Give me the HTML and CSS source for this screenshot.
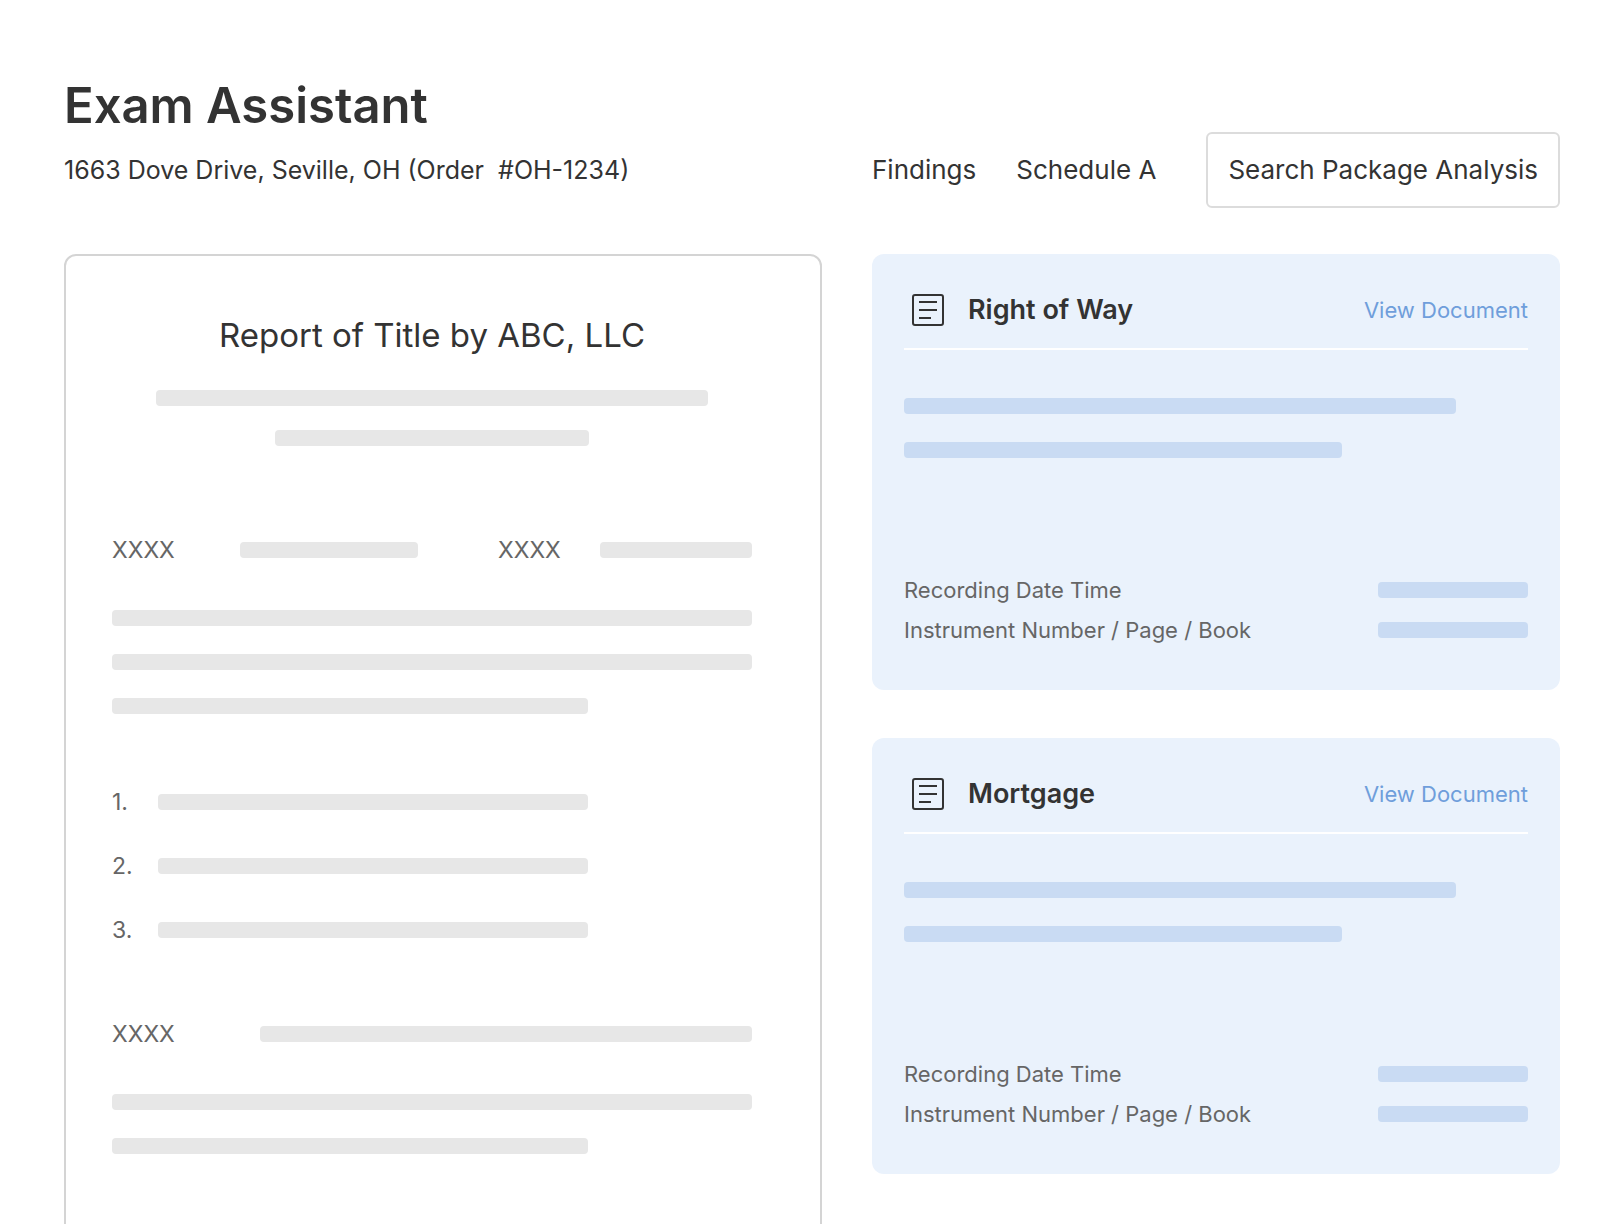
FILE: index.html
```html
<!DOCTYPE html>
<html lang="en">
<head>
    <meta charset="UTF-8">
    <meta name="viewport" content="width=device-width, initial-scale=1.0">
    <title>Exam Assistant</title>
    <link rel="stylesheet" href="styles.css">
</head>
<body>

<div class="page">
    <header class="header">
        <div class="heading">
            <h1>Exam Assistant</h1>
            <p>1663 Dove Drive, Seville, OH (Order &nbsp;#OH-1234)</p>
        </div>
        <nav class="nav">
            <a href="#findings">Findings</a>
            <a href="#schedule-a">Schedule A</a>
            <button type="button">Search Package Analysis</button>
        </nav>
    </header>

    <main class="content">
        <section class="report">
            <h2>Report of Title by ABC, LLC</h2>
            <div class="lines lines-center">
                <span class="bar bar-long"></span>
                <span class="bar bar-short"></span>
            </div>

            <div class="fields fields-double">
                <div class="field">
                    <span class="label">XXXX</span>
                    <span class="bar"></span>
                </div>
                <div class="field">
                    <span class="label">XXXX</span>
                    <span class="bar"></span>
                </div>
            </div>
            <div class="lines">
                <span class="bar"></span>
                <span class="bar"></span>
                <span class="bar bar-part"></span>
            </div>

            <ol class="items">
                <li><span class="bar"></span></li>
                <li><span class="bar"></span></li>
                <li><span class="bar"></span></li>
            </ol>

            <div class="fields fields-single">
                <div class="field">
                    <span class="label">XXXX</span>
                    <span class="bar"></span>
                </div>
            </div>
            <div class="lines">
                <span class="bar"></span>
                <span class="bar bar-part"></span>
            </div>
        </section>

        <div class="cards" id="findings">
            <article class="card">
                <div class="card-head">
                    <svg class="icon" viewBox="0 0 32 32" aria-hidden="true">
                        <rect x="1" y="1" width="30" height="30" rx="2"/>
                        <path d="M7 8h18M7 16h18M7 24h12"/>
                    </svg>
                    <h3>Right of Way</h3>
                    <a href="#right-of-way">View Document</a>
                </div>
                <div class="lines">
                    <span class="bar bar-long"></span>
                    <span class="bar bar-medium"></span>
                </div>
                <dl class="details">
                    <div>
                        <dt>Recording Date Time</dt>
                        <dd class="bar"></dd>
                    </div>
                    <div>
                        <dt>Instrument Number / Page / Book</dt>
                        <dd class="bar"></dd>
                    </div>
                </dl>
            </article>

            <article class="card">
                <div class="card-head">
                    <svg class="icon" viewBox="0 0 32 32" aria-hidden="true">
                        <rect x="1" y="1" width="30" height="30" rx="2"/>
                        <path d="M7 8h18M7 16h18M7 24h12"/>
                    </svg>
                    <h3>Mortgage</h3>
                    <a href="#mortgage">View Document</a>
                </div>
                <div class="lines">
                    <span class="bar bar-long"></span>
                    <span class="bar bar-medium"></span>
                </div>
                <dl class="details">
                    <div>
                        <dt>Recording Date Time</dt>
                        <dd class="bar"></dd>
                    </div>
                    <div>
                        <dt>Instrument Number / Page / Book</dt>
                        <dd class="bar"></dd>
                    </div>
                </dl>
            </article>
        </div>
    </main>
</div>

</body>
</html>
```
FILE: styles.css
```css
* {
    box-sizing: border-box;
}

body {
    margin: 0;
    background-color: #fff;
    color: #333;
    font-family: Inter, "Liberation Sans", sans-serif;
    font-size: 26px;
    line-height: 32px;
}

h1, h2, h3, p, ol, dl, dd {
    margin: 0;
    padding: 0;
}

a {
    color: inherit;
    text-decoration: none;
}

.page {
    height: 100vh;
    padding: 76px 64px 0;
    overflow: hidden;
}

/* header and content share the same two columns */
.header, .content {
    display: grid;
    grid-template-columns: 758fr 688fr;
    column-gap: 50px;
}

.header {
    align-items: end;
    margin-bottom: 46px;
}

.heading {
    padding-bottom: 22px;
}

.heading h1 {
    margin-bottom: 18px;
    font-size: 49px;
    font-weight: 600;
    line-height: 60px;
}

.heading p {
    font-size: 25px;
}

.nav {
    display: flex;
    align-items: center;
    gap: 40px;
    white-space: nowrap;
}

.nav button {
    height: 76px;
    margin-left: auto;
    padding: 0 20px;
    background-color: #fff;
    color: inherit;
    border: 2px solid #dcdcdc;
    border-radius: 6px;
    font: inherit;
    cursor: pointer;
}

.content {
    align-items: start;
}

/* placeholder text */
.bar {
    display: block;
    height: 16px;
    max-width: 100%;
    background-color: #e7e7e7;
    border-radius: 4px;
}

.bar-long {
    width: 552px;
}

.bar-medium {
    width: 438px;
}

.bar-short {
    width: 314px;
}

.bar-part {
    width: 476px;
}

.lines {
    display: flex;
    flex-direction: column;
    gap: 28px;
}

.lines-center {
    align-items: center;
    gap: 24px;
}

.report {
    padding: 57px 68px 120px 46px;
    border: 2px solid #d4d4d4;
    border-radius: 12px;
}

.report h2 {
    margin-bottom: 33px;
    font-size: 33px;
    font-weight: 400;
    line-height: 44px;
    text-align: center;
}

.label, .items {
    color: #666;
    font-size: 23px;
}

.fields {
    display: grid;
    gap: 80px;
}

.fields-double {
    grid-template-columns: 306fr 254fr;
    margin: 88px 0 44px;
}

.fields-single {
    margin: 72px 0 44px;
}

.field {
    display: grid;
    grid-template-columns: 128px 1fr;
    align-items: center;
}

.fields-double .field:last-child {
    grid-template-columns: 102px 1fr;
}

.fields-single .field {
    grid-template-columns: 148px 1fr;
}

.items {
    display: flex;
    flex-direction: column;
    gap: 32px;
    width: 476px;
    max-width: 100%;
    margin-top: 72px;
    list-style: none;
    counter-reset: item;
}

.items li {
    display: grid;
    grid-template-columns: 46px 1fr;
    align-items: center;
    counter-increment: item;
}

.items li::before {
    content: counter(item) ".";
}

.cards {
    display: grid;
    gap: 48px;
}

.card {
    padding: 40px 32px 44px;
    background-color: #eaf2fc;
    border-radius: 12px;
}

.card .bar {
    background-color: #c9dbf3;
}

.card-head {
    display: flex;
    align-items: center;
    gap: 24px;
    margin-bottom: 48px;
    padding: 0 0 22px 8px;
    border-bottom: 2px solid #fff;
}

.card-head h3 {
    flex: 1;
    font-size: 27px;
    font-weight: 600;
}

.card-head a {
    color: #6f9edb;
    font-size: 22px;
}

.icon {
    flex: none;
    width: 32px;
    height: 32px;
    fill: none;
    stroke: #333;
    stroke-width: 2;
}

.details {
    display: grid;
    gap: 8px;
    margin-top: 116px;
    color: #666;
    font-size: 22px;
}

.details div {
    display: flex;
    align-items: center;
    justify-content: space-between;
}

.details .bar {
    width: 150px;
}
```
